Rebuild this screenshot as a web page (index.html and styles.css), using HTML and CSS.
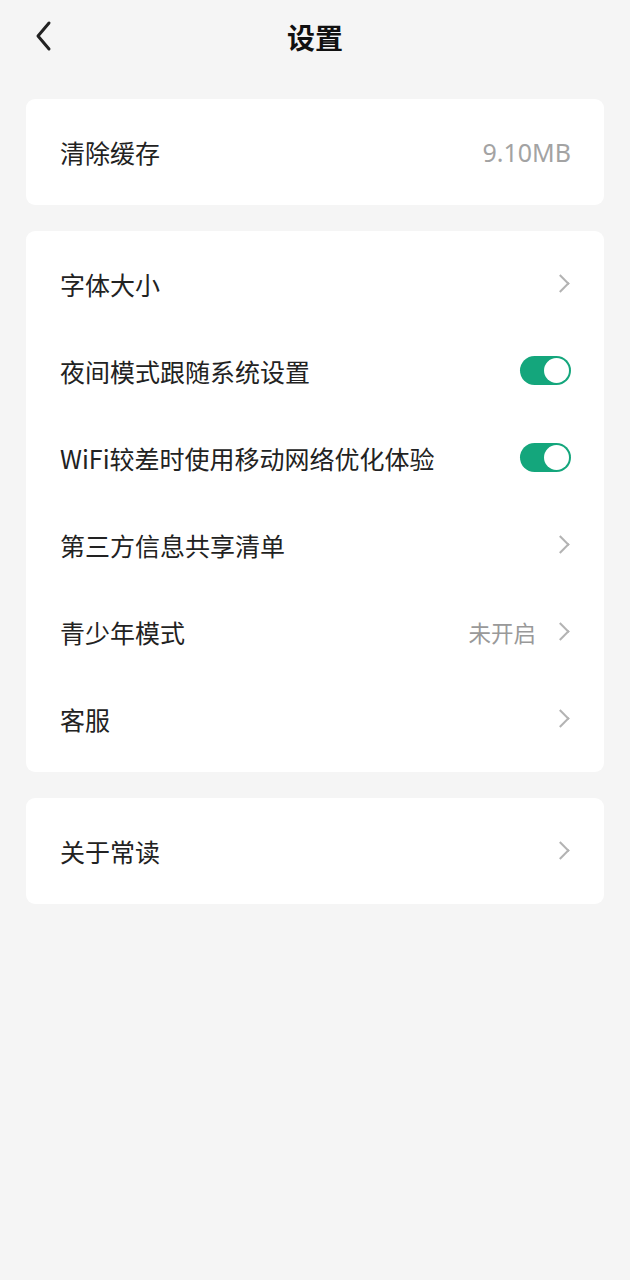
FILE: index.html
```html
<!DOCTYPE html>
<html lang="zh-CN">
<head>
  <meta charset="UTF-8">
  <meta name="viewport" content="width=device-width, initial-scale=1.0">
  <title>设置</title>
  <link rel="stylesheet" href="styles.css">
</head>
<body>
  <header class="topbar">
    <a class="back" href="#back">
      <svg width="20" height="32" viewBox="0 0 20 32"><path d="M16 3 L5 16 L16 29" fill="none" stroke="#222" stroke-width="3" stroke-linecap="round" stroke-linejoin="round"/></svg>
    </a>
    <h1 class="title">设置</h1>
  </header>

  <div class="card">
    <div class="row">
      <span class="label">清除缓存</span>
      <span class="value">9.10MB</span>
    </div>
  </div>

  <div class="card">
    <div class="row">
      <span class="label">字体大小</span>
      <span class="arrow"></span>
    </div>
    <div class="row">
      <span class="label">夜间模式跟随系统设置</span>
      <span class="switch on"></span>
    </div>
    <div class="row">
      <span class="label">WiFi较差时使用移动网络优化体验</span>
      <span class="switch on"></span>
    </div>
    <div class="row">
      <span class="label">第三方信息共享清单</span>
      <span class="arrow"></span>
    </div>
    <div class="row">
      <span class="label">青少年模式</span>
      <span class="extra">未开启</span>
      <span class="arrow"></span>
    </div>
    <div class="row">
      <span class="label">客服</span>
      <span class="arrow"></span>
    </div>
  </div>

  <div class="card">
    <div class="row">
      <span class="label">关于常读</span>
      <span class="arrow"></span>
    </div>
  </div>
</body>
</html>
```

FILE: styles.css
```css
body {
  margin: 0;
  padding: 0 26px;
  background: #f5f5f5;
  font-family: "Noto Sans CJK SC", "Noto Sans", sans-serif;
  color: #222;
}

.topbar {
  position: relative;
  height: 74px;
  display: flex;
  align-items: center;
  justify-content: center;
  margin-bottom: 25px;
}

.topbar .back {
  position: absolute;
  left: 7px;
  top: 20px;
  display: flex;
}

.title {
  margin: 0;
  font-size: 28px;
  font-weight: bold;
  color: #111;
}

.card {
  background: #fff;
  border-radius: 9px;
  padding: 9px 0 10px;
  margin-bottom: 26px;
}

.row {
  height: 87px;
  display: flex;
  align-items: center;
  padding: 0 33px 0 34px;
}

.label {
  flex: 1;
  font-size: 25px;
  color: #222;
}

.value {
  font-size: 25px;
  color: #a3a3a3;
  font-family: "Noto Sans", sans-serif;
}

.extra {
  font-size: 22.5px;
  color: #999;
  margin-right: 18px;
}

.arrow {
  width: 11px;
  height: 11px;
  border-top: 2px solid #b3b3b3;
  border-right: 2px solid #b3b3b3;
  transform: rotate(45deg);
  margin-right: 4px;
}

.switch {
  position: relative;
  width: 51px;
  height: 29px;
  border-radius: 15px;
  background: #ccc;
}

.switch.on {
  background: #14a67c;
}

.switch::after {
  content: "";
  position: absolute;
  top: 2px;
  left: 2px;
  width: 25px;
  height: 25px;
  border-radius: 50%;
  background: #fff;
}

.switch.on::after {
  left: 24px;
}
```
